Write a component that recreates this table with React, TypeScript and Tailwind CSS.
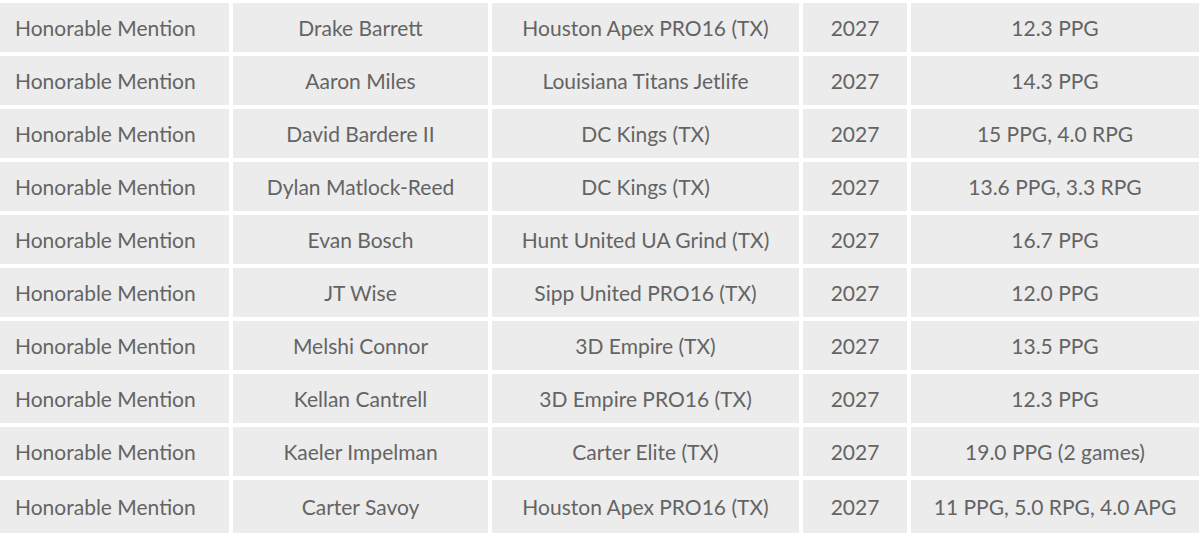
import React from 'react';

const rows = [
    ['Drake Barrett', 'Houston Apex PRO16 (TX)', '12.3 PPG'],
    ['Aaron Miles', 'Louisiana Titans Jetlife', '14.3 PPG'],
    ['David Bardere II', 'DC Kings (TX)', '15 PPG, 4.0 RPG'],
    ['Dylan Matlock-Reed', 'DC Kings (TX)', '13.6 PPG, 3.3 RPG'],
    ['Evan Bosch', 'Hunt United UA Grind (TX)', '16.7 PPG'],
    ['JT Wise', 'Sipp United PRO16 (TX)', '12.0 PPG'],
    ['Melshi Connor', '3D Empire (TX)', '13.5 PPG'],
    ['Kellan Cantrell', '3D Empire PRO16 (TX)', '12.3 PPG'],
    ['Kaeler Impelman', 'Carter Elite (TX)', '19.0 PPG (2 games)'],
    ['Carter Savoy', 'Houston Apex PRO16 (TX)', '11 PPG, 5.0 RPG, 4.0 APG'],
];

const cell = 'bg-[#ececec] flex items-center justify-center';

const App = () => {
    return (
        <div className="w-[1200px] h-[540px] bg-white overflow-hidden pt-[3px] font-['Lato','Liberation_Sans',sans-serif] text-[21px] text-[#646464]">
            <div className="grid grid-cols-[229px_255px_307px_104px_288px] grid-rows-[repeat(9,49px)_53px] gap-x-[4px] gap-y-[4px]">
                {rows.map(([name, team, stats]) => (
                    <React.Fragment key={name}>
                        <div className="bg-[#ececec] flex items-center pl-[15px]">Honorable Mention</div>
                        <div className={cell}>{name}</div>
                        <div className={cell}>{team}</div>
                        <div className={cell}>2027</div>
                        <div className={cell}>{stats}</div>
                    </React.Fragment>
                ))}
            </div>
        </div>
    );
};

export default App;
